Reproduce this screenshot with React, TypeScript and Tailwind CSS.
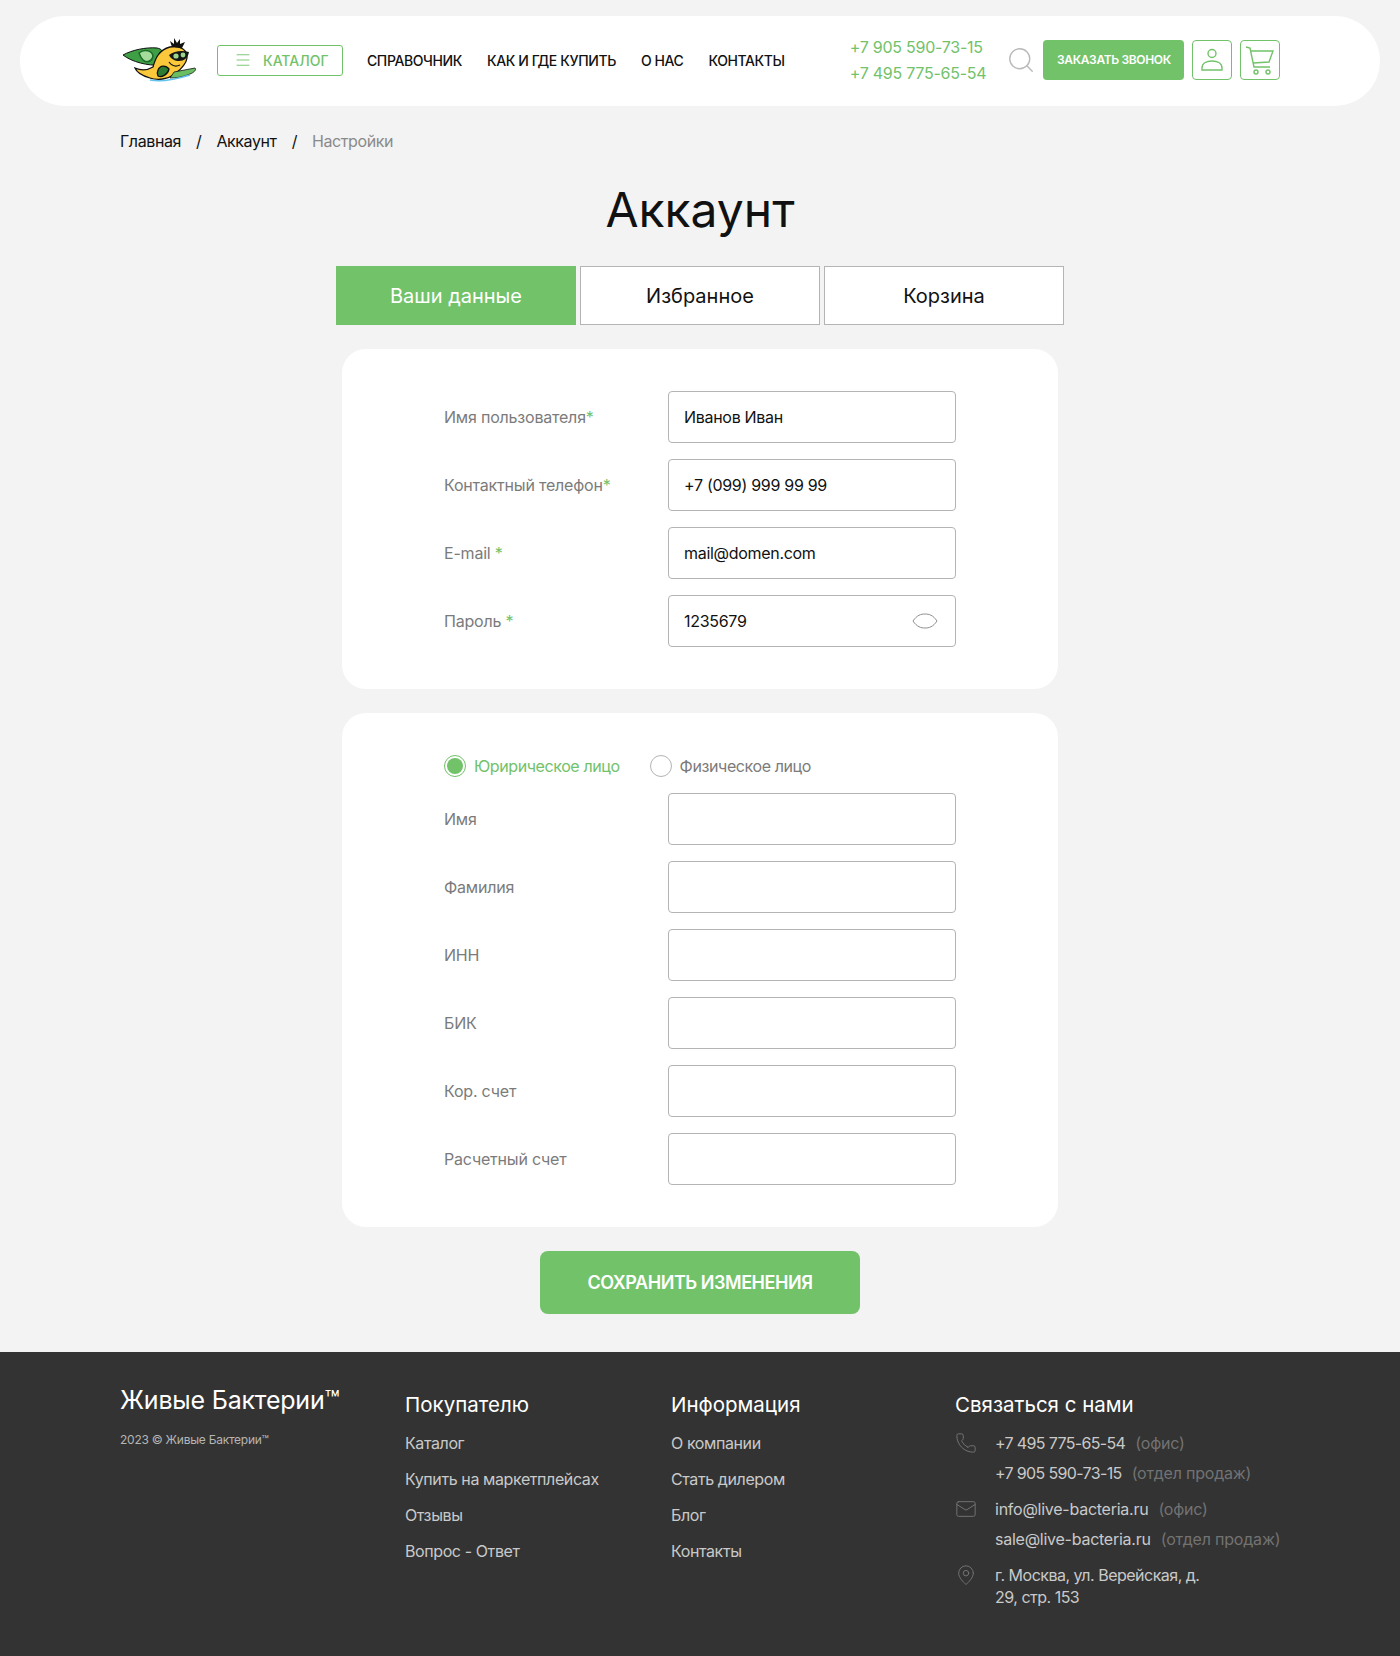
import { Menu, Search, Phone, Mail, MapPin } from 'lucide-react';

const nav = ['СПРАВОЧНИК', 'КАК И ГДЕ КУПИТЬ', 'О НАС', 'КОНТАКТЫ'];

const accountFields = [
  { label: 'Имя пользователя', star: '*', value: 'Иванов Иван' },
  { label: 'Контактный телефон', star: '*', value: '+7 (099) 999 99 99' },
  { label: 'E-mail', star: ' *', value: 'mail@domen.com' },
];

const legalFields = ['Имя', 'Фамилия', 'ИНН', 'БИК', 'Кор. счет', 'Расчетный счет'];

const buyerLinks = ['Каталог', 'Купить на маркетплейсах', 'Отзывы', 'Вопрос - Ответ'];
const infoLinks = ['О компании', 'Стать дилером', 'Блог', 'Контакты'];

function Logo() {
  return (
    <svg width="76" height="44" viewBox="0 0 76 44" className="shrink-0">
      <path d="M1 17 C10 12 24 9 35 10 C40 11 42 14 42 18 L38 27 C26 28 10 24 1 17Z" fill="#3f9f45" stroke="#111" strokeWidth="1" />
      <path d="M17 15 C22 11 30 12 31 18 C30 24 24 25 21 22 C19 20 18 18 17 15Z" fill="#a5dc9b" stroke="#1c6b2a" strokeWidth="1.6" />
      <path d="M13 30 C20 33 26 32 31 29 C33 22 36 12 48 9 C58 7 66 12 65 20 C64 27 58 32 53 36 C46 41 36 43 28 40 C21 38 15 35 13 30Z" fill="#fcc83b" stroke="#111" strokeWidth="1.3" />
      <path d="M47 17 C52 13 60 12 67 14 C66 20 62 23 57 23 C53 23 49 21 47 17Z" fill="#161616" />
      <circle cx="54" cy="18" r="2.6" fill="#9ad68c" />
      <circle cx="61" cy="17" r="2.4" fill="#9ad68c" />
      <path d="M47 24 C50 28 54 29 58 27" fill="none" stroke="#111" strokeWidth="1.2" />
      <path d="M50 9 L48 3 L52 6 L52 0 L55 5 L58 1 L58 6 L63 4 L60 10Z" fill="#111" />
      <path d="M36 32 C38 27 44 27 47 31 C46 36 40 40 36 38 C35 36 35 34 36 32Z" fill="#2c7d33" stroke="#111" strokeWidth="1.3" />
      <path d="M52 34 L73 30 C75 32 71 35 68 36 C62 39 54 40 48 40Z" fill="#6bbd62" stroke="#111" strokeWidth="0.8" />
      <path d="M28 42 C38 44 52 42 68 37" fill="none" stroke="#62c4ee" strokeWidth="1.4" />
    </svg>
  );
}

function UserIcon() {
  return (
    <svg width="24" height="28" viewBox="0 0 24 28" fill="none" stroke="#72c26a" strokeWidth="1.4">
      <circle cx="12" cy="7.5" r="4" />
      <path d="M2 24 V22 C2 17 7 15 12 15 C17 15 22 17 22 22 V24 Z" />
    </svg>
  );
}

function CartIcon() {
  return (
    <svg width="30" height="32" viewBox="0 0 30 32" fill="none" stroke="#72c26a" strokeWidth="1.4">
      <path d="M1 3 L5 4 L9 23 H25" />
      <path d="M6 7 H28 L24 18 L8 19" />
      <circle cx="11" cy="28" r="2" />
      <circle cx="23" cy="28" r="2" />
    </svg>
  );
}

function EyeIcon() {
  return (
    <svg width="26" height="16" viewBox="0 0 26 16" fill="none" stroke="#8f8f8f" strokeWidth="1">
      <path d="M1 8 C5 2 9 1 13 1 C17 1 21 2 25 8 C21 14 17 15 13 15 C9 15 5 14 1 8Z" />
    </svg>
  );
}

function FieldRow({ label, star, value, eye }: { label: string; star?: string; value?: string; eye?: boolean }) {
  return (
    <div className="flex items-center h-[52px]">
      <div className="w-[224px] text-[16px] tracking-[-0.2px] text-[#7b7b7b]">
        {label}
        {star && <span className="text-[#72c26a] whitespace-pre">{star}</span>}
      </div>
      <div className="w-[288px] h-[52px] bg-white border border-[#b4b4b4] rounded-[4px] flex items-center justify-between pl-[15px] pr-[17px] text-[16px] tracking-[-0.3px] text-[#111]">
        <span>{value}</span>
        {eye && <EyeIcon />}
      </div>
    </div>
  );
}

function ContactLine({ main, note, tight }: { main: string; note: string; tight?: boolean }) {
  return (
    <div className="flex gap-[10px] h-[30px] items-center text-[16px] whitespace-nowrap">
      <span className={tight ? 'text-[#c9c9c9] tracking-[-0.65px]' : 'text-[#c9c9c9] tracking-[-0.25px]'}>{main}</span>
      <span className="text-[#727272] tracking-[-0.2px]">{note}</span>
    </div>
  );
}

export default function App() {
  return (
    <div className="min-h-[1656px] bg-[#f3f3f3] font-['Inter',sans-serif] overflow-hidden">
      <header className="mt-4 mx-5 pb-[2px] h-[90px] w-[1360px] bg-white rounded-[45px] flex items-center pl-[102px]">
        <Logo />
        <button className="ml-[19px] w-[126px] h-[31px] border border-[#72c26a] rounded-[3px] flex items-center pl-[16px] gap-[11px] text-[14px] font-medium text-[#72c26a]">
          <Menu size={18} strokeWidth={1.2} />
          КАТАЛОГ
        </button>
        <nav className="ml-[24px] flex gap-[25px] text-[14px] font-medium text-[#111] whitespace-nowrap tracking-[-0.4px]">
          {nav.map(n => (
            <a key={n}>{n}</a>
          ))}
        </nav>
        <div className="ml-[65px] flex flex-col gap-[6px] text-[16px] leading-[20px] text-[#72c26a] tracking-[-0.25px] whitespace-nowrap">
          <span>+7 905 590-73-15</span>
          <span>+7 495 775-65-54</span>
        </div>
        <Search size={30} strokeWidth={1.1} className="ml-[20px] text-[#b9b9b9]" />
        <button className="ml-[7px] w-[141px] h-[40px] bg-[#72c26a] rounded-[4px] text-white text-[12px] tracking-[-0.35px] font-semibold whitespace-nowrap">
          ЗАКАЗАТЬ ЗВОНОК
        </button>
        <button className="ml-[8px] w-[40px] h-[40px] border border-[#72c26a] rounded-[4px] flex items-center justify-center">
          <UserIcon />
        </button>
        <button className="ml-[8px] w-[40px] h-[40px] border border-[#72c26a] rounded-[4px] flex items-center justify-center">
          <CartIcon />
        </button>
      </header>

      <div className="mt-[24px] ml-[120px] flex items-center h-[22px] text-[16px] tracking-[-0.4px] text-[#111]">
        <span>Главная</span>
        <span className="mx-[15px]">/</span>
        <span>Аккаунт</span>
        <span className="mx-[15px]">/</span>
        <span className="text-[#8a8a8a]">Настройки</span>
      </div>

      <h1 className="mt-[23px] h-[70px] leading-[70px] text-center text-[48px] font-normal text-[#111]">Аккаунт</h1>

      <div className="mt-[21px] flex justify-center gap-[4px]">
        <button className="w-[240px] h-[59px] bg-[#72c26a] text-white text-[20px]">Ваши данные</button>
        <button className="w-[240px] h-[59px] bg-white border border-[#b4b4b4] text-[#111] text-[20px]">Избранное</button>
        <button className="w-[240px] h-[59px] bg-white border border-[#b4b4b4] text-[#111] text-[20px]">Корзина</button>
      </div>

      <section className="mt-[24px] mx-auto w-[716px] h-[340px] bg-white rounded-[24px] pt-[42px] pl-[102px] flex flex-col gap-[16px]">
        {accountFields.map(f => (
          <FieldRow key={f.label} label={f.label} star={f.star} value={f.value} />
        ))}
        <FieldRow label="Пароль" star=" *" value="1235679" eye />
      </section>

      <section className="mt-[24px] mx-auto w-[716px] h-[514px] bg-white rounded-[24px] pt-[42px] pl-[102px]">
        <div className="flex items-center h-[22px] text-[16px] tracking-[-0.4px]">
          <span className="w-[22px] h-[22px] rounded-full border border-[#72c26a] flex items-center justify-center">
            <span className="w-[16px] h-[16px] rounded-full bg-[#72c26a]" />
          </span>
          <span className="ml-[8px] text-[#72c26a]">Юририческое лицо</span>
          <span className="ml-[30px] w-[22px] h-[22px] rounded-full border border-[#b4b4b4]" />
          <span className="ml-[8px] text-[#7b7b7b]">Физическое лицо</span>
        </div>
        <div className="mt-[16px] flex flex-col gap-[16px]">
          {legalFields.map(f => (
            <FieldRow key={f} label={f} />
          ))}
        </div>
      </section>

      <div className="mt-[24px] flex justify-center">
        <button className="w-[320px] h-[63px] bg-[#72c26a] rounded-[8px] text-white text-[18px] tracking-[-0.45px] font-semibold">
          СОХРАНИТЬ ИЗМЕНЕНИЯ
        </button>
      </div>

      <footer className="mt-[38px] h-[304px] bg-[#333333] flex pl-[120px] pt-[32px] text-[16px] text-[#c9c9c9]">
        <div className="w-[285px]">
          <div className="text-[25px] leading-[32px] tracking-[-0.2px] text-white whitespace-nowrap">Живые Бактерии™</div>
          <div className="mt-[16px] text-[12px] leading-[16px] tracking-[-0.25px] text-[#b5b5b5]">2023 © Живые Бактерии™</div>
        </div>
        <div className="w-[266px] pt-[5px]">
          <div className="text-[20.5px] leading-[32px] text-white">Покупателю</div>
          <div className="mt-[10px] flex flex-col gap-[12px] tracking-[-0.4px]">
            {buyerLinks.map(l => (
              <div key={l} className="h-[24px] leading-[24px]">{l}</div>
            ))}
          </div>
        </div>
        <div className="w-[284px] pt-[5px]">
          <div className="text-[20.5px] leading-[32px] text-white">Информация</div>
          <div className="mt-[10px] flex flex-col gap-[12px] tracking-[-0.4px]">
            {infoLinks.map(l => (
              <div key={l} className="h-[24px] leading-[24px]">{l}</div>
            ))}
          </div>
        </div>
        <div className="pt-[5px]">
          <div className="text-[20.5px] leading-[32px] text-white">Связаться с нами</div>
          <div className="mt-[7px] flex">
            <Phone size={22} strokeWidth={1} className="mt-[4px] text-[#777]" />
            <div className="ml-[18px]">
              <ContactLine main="+7 495 775-65-54" note="(офис)" tight />
              <ContactLine main="+7 905 590-73-15" note="(отдел продаж)" tight />
            </div>
          </div>
          <div className="mt-[6px] flex">
            <Mail size={22} strokeWidth={1} className="mt-[4px] text-[#777]" />
            <div className="ml-[18px]">
              <ContactLine main="info@live-bacteria.ru" note="(офис)" />
              <ContactLine main="sale@live-bacteria.ru" note="(отдел продаж)" />
            </div>
          </div>
          <div className="mt-[6px] flex">
            <MapPin size={22} strokeWidth={1} className="mt-[4px] text-[#777]" />
            <div className="ml-[18px] w-[220px] leading-[22px] pt-[4px] tracking-[-0.5px]">г. Москва, ул. Верейская, д. 29, стр. 153</div>
          </div>
        </div>
      </footer>
    </div>
  );
}
